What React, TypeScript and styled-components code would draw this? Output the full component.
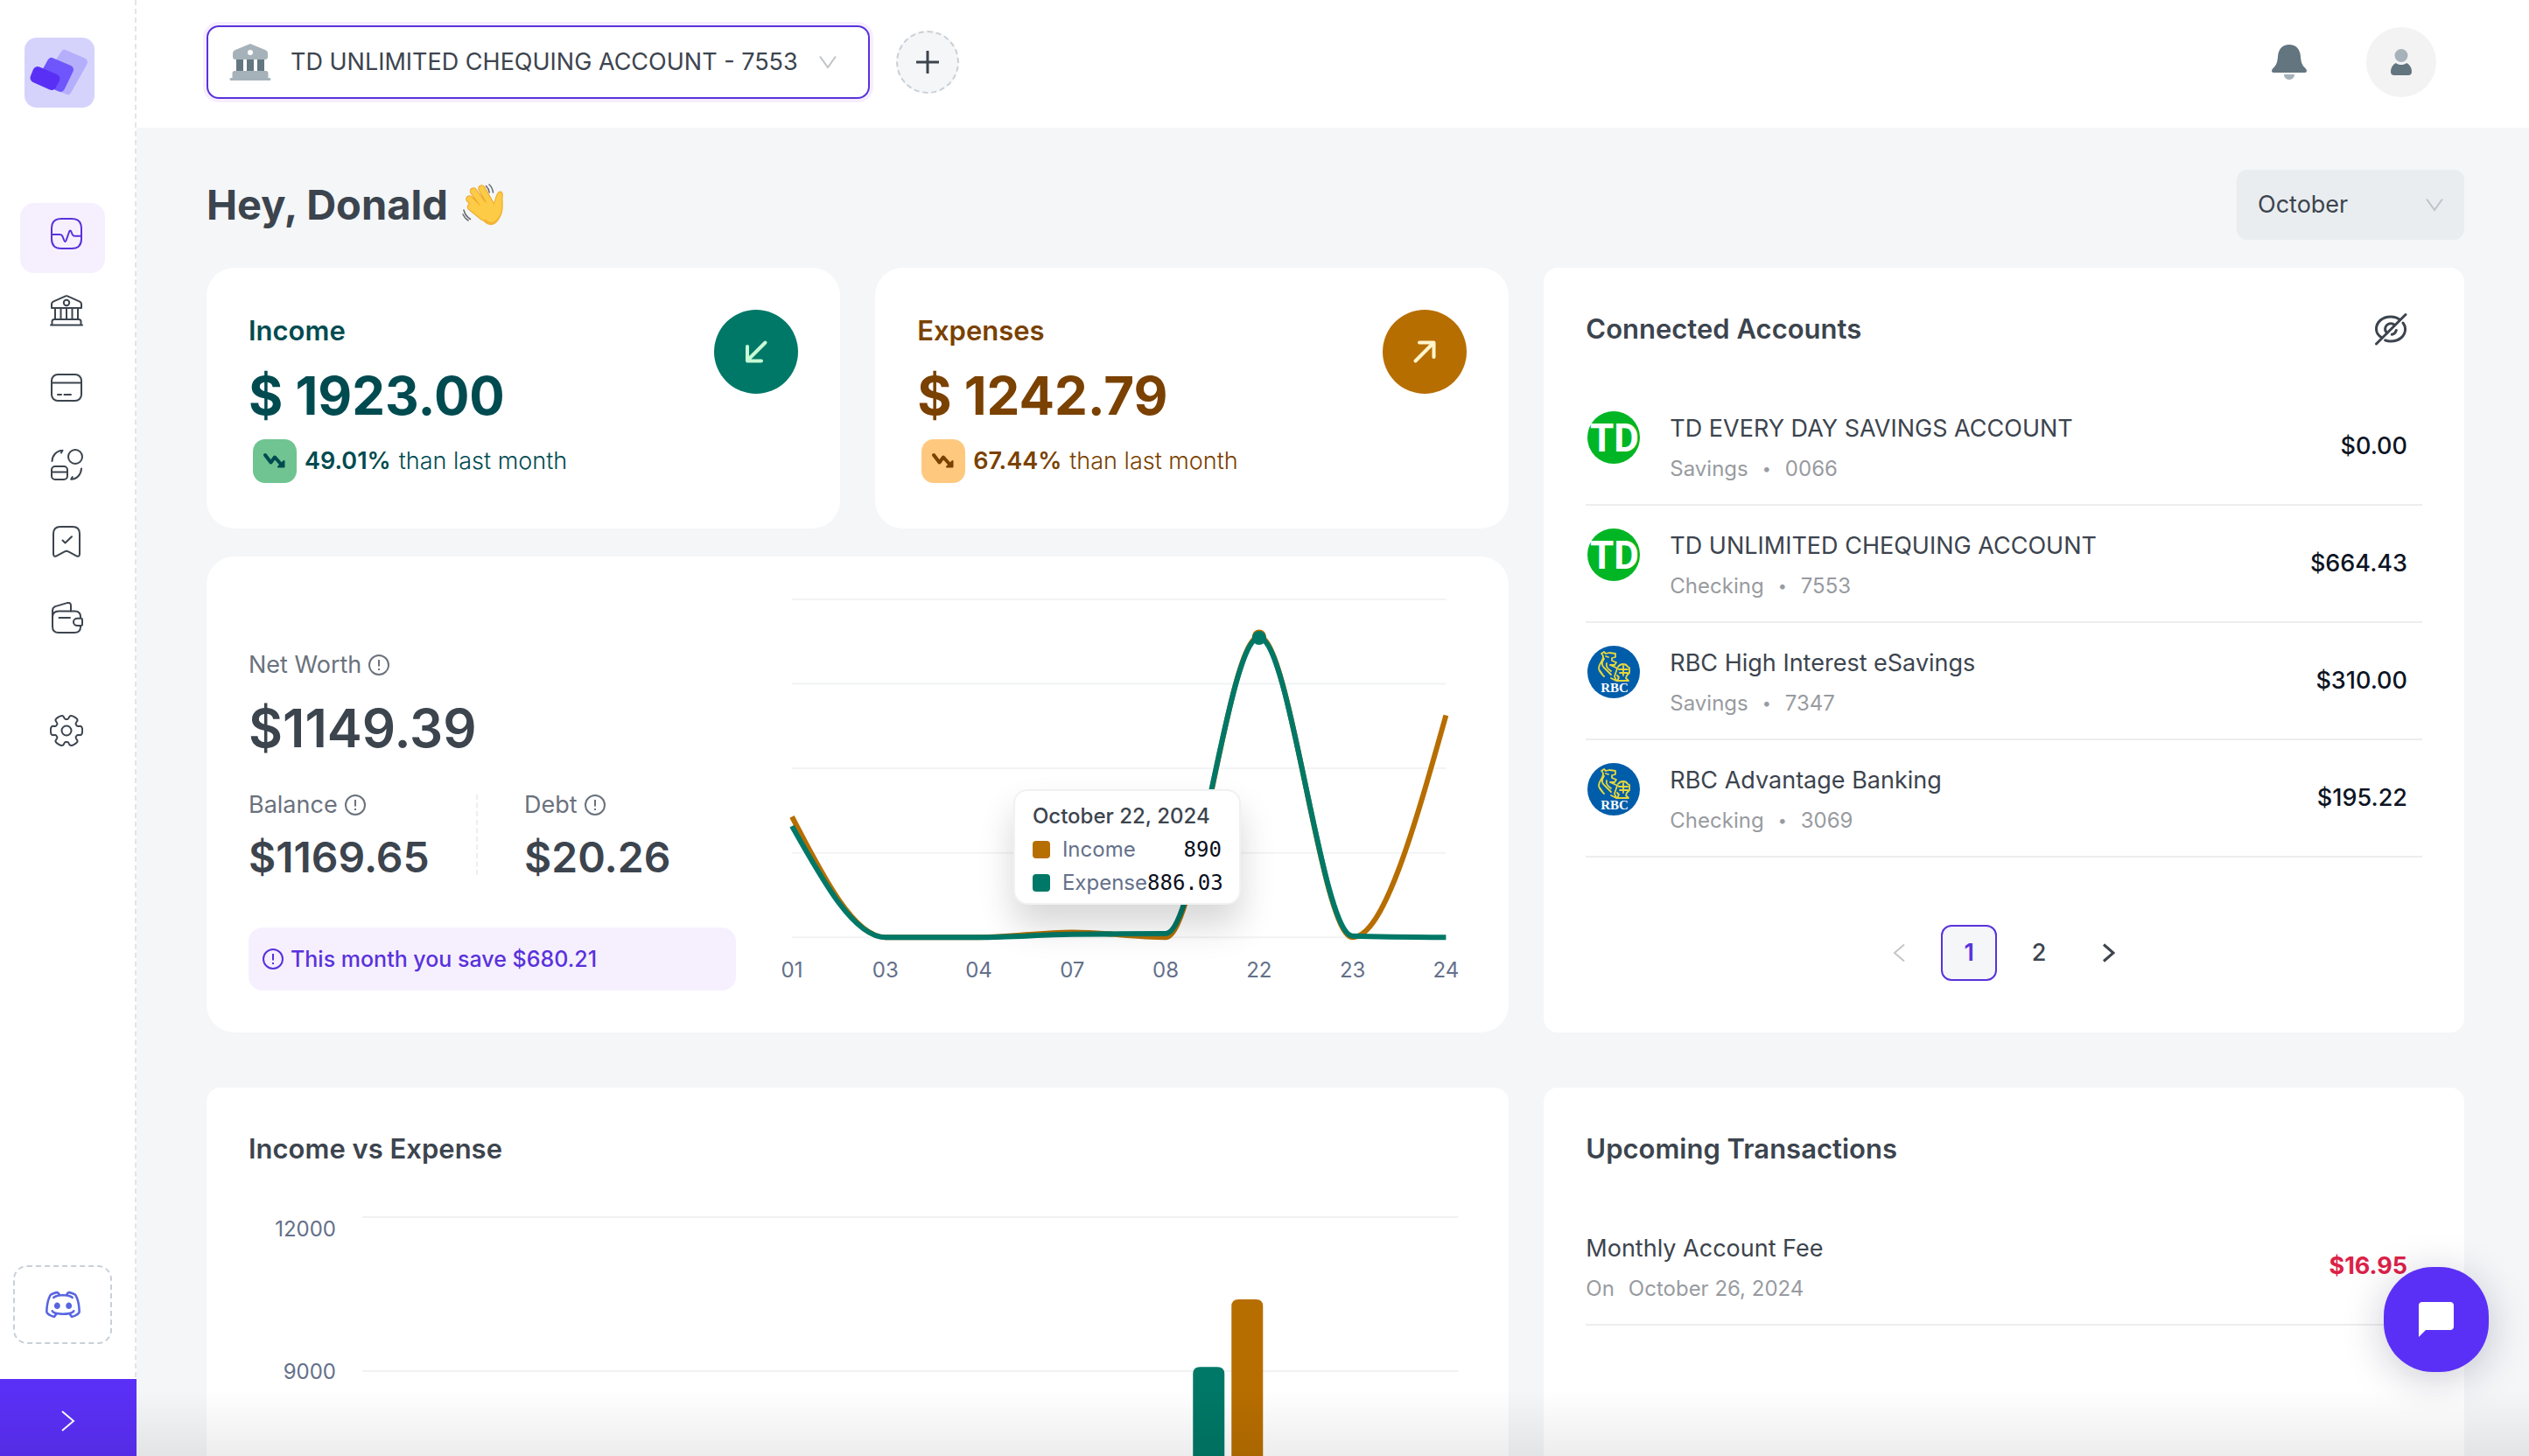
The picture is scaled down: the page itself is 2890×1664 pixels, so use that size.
import React from "react";
import styled, { createGlobalStyle, css } from "styled-components";
import { RxDiscordLogo } from "react-icons/rx";

const font = `Inter, "Liberation Sans", sans-serif`;
const mono = `"DejaVu Sans Mono", "Liberation Mono", monospace`;

const c = {
  purple: "#5b30f6",
  purpleText: "#5932dc",
  lilac: "#f6f0fe",
  page: "#f4f6f8",
  ink: "#3c444e",
  label: "#6a727d",
  muted: "#989ba0",
  axis: "#64708a",
  line: "#eceded",
  green: "#007867",
  amber: "#b76e00",
};

const GlobalStyle = createGlobalStyle`
  *, *::before, *::after { box-sizing: border-box; }
  body { margin: 0; background: ${c.page}; color: ${c.ink}; font-family: ${font}; font-size: 27px; line-height: 40px; }
  h1, h2, p, ul, dl, dd { margin: 0; padding: 0; }
  ul { list-style: none; }
  button, select { font: inherit; color: inherit; cursor: pointer; }
  svg { display: block; flex: none; }
`;

/* ---------- shell ---------- */

const Shell = styled.div`
  display: flex;
  height: 100vh;
  overflow: hidden;
`;

const Sidebar = styled.aside`
  flex: none;
  display: flex;
  flex-direction: column;
  width: 156px;
  background: #fff;
  border-right: 2px dashed #e2e5e8;
`;

const LogoLink = styled.a`
  margin: 43px 0 0 28px;
  width: 80px;
  height: 80px;
`;

const Nav = styled.nav`
  display: flex;
  flex-direction: column;
  gap: 8px;
  margin: 109px 0 0 23px;
`;

const NavItem = styled.a<{ $active?: boolean; $apart?: boolean }>`
  display: flex;
  align-items: flex-start;
  width: 97px;
  height: 80px;
  padding: 16px 0 0 34px;
  border-radius: 16px;
  color: ${(p) => (p.$active ? c.purpleText : c.ink)};
  background: ${(p) => (p.$active ? c.lilac : "transparent")};
  margin-top: ${(p) => (p.$apart ? "40px" : "0")};
`;

const CommunityLink = styled.a`
  display: flex;
  align-items: center;
  justify-content: center;
  width: 113px;
  height: 90px;
  margin: auto 0 40px 15px;
  border: 2px dashed #c8d0d7;
  border-radius: 16px;
  color: #5865e0;
`;

const ExpandButton = styled.button`
  display: flex;
  align-items: center;
  justify-content: center;
  width: 156px;
  height: 88px;
  flex: none;
  padding: 8px 0 0;
  border: 0;
  color: #fff;
  background: ${c.purple};
`;

const Page = styled.div`
  flex: 1;
  min-width: 0;
  display: flex;
  flex-direction: column;
`;

const Header = styled.header`
  flex: none;
  display: flex;
  align-items: center;
  height: 146px;
  padding: 0 106px 4px 80px;
  background: #fff;
`;

const AccountPicker = styled.label`
  position: relative;
  display: flex;
  align-items: center;
  gap: 22px;
  width: 758px;
  height: 84px;
  padding-left: 24px;
  border: 2px solid ${c.purpleText};
  border-radius: 14px;
  box-shadow: 0 0 0 4px #f6eefe;
`;

const BareSelect = styled.select`
  flex: 1;
  min-width: 0;
  height: 100%;
  padding: 0;
  border: 0;
  outline: 0;
  appearance: none;
  background: transparent;
`;

const Caret = styled.span<{ $right: number }>`
  position: absolute;
  right: ${(p) => p.$right}px;
  top: 50%;
  transform: translateY(-50%);
  pointer-events: none;
  color: #bfc3c7;
`;

const AddButton = styled.button`
  display: grid;
  place-items: center;
  width: 72px;
  height: 72px;
  margin-left: 30px;
  padding: 0;
  border: 2px dashed #c8d0d7;
  border-radius: 50%;
  background: ${c.page};
`;

const HeaderActions = styled.div`
  display: flex;
  align-items: center;
  gap: 68px;
  margin-left: auto;
`;

const PlainButton = styled.button`
  padding: 0;
  border: 0;
  background: none;
`;

const Avatar = styled.button`
  display: grid;
  place-items: center;
  width: 80px;
  height: 80px;
  padding: 0;
  border: 0;
  border-radius: 50%;
  background: #f3f3f3;
`;

const Main = styled.main`
  flex: 1;
  min-height: 0;
  overflow: hidden;
  padding: 48px 74px 0 80px;
`;

const Greeting = styled.div`
  display: flex;
  align-items: center;
  justify-content: space-between;
  height: 80px;
  margin-bottom: 32px;
`;

const Hello = styled.h1`
  display: flex;
  align-items: center;
  gap: 16px;
  font-size: 47px;
  line-height: 64px;
  font-weight: 700;
`;

const MonthPicker = styled.label`
  position: relative;
  display: flex;
  width: 260px;
  height: 80px;
  padding-left: 24px;
  border-radius: 12px;
  background: #e9edf0;
`;

const Grid = styled.div`
  display: grid;
  grid-template-columns: repeat(12, minmax(0, 1fr));
  column-gap: 40px;
  row-gap: 63px;
`;

const Column = styled.div<{ $span: number }>`
  grid-column: span ${(p) => p.$span};
  display: flex;
  flex-direction: column;
  gap: 32px;
`;

const Card = styled.section<{ $round?: boolean }>`
  padding: 48px;
  border-radius: ${(p) => (p.$round ? 32 : 16)}px;
  background: #fff;
`;

const Pair = styled.div`
  display: grid;
  grid-template-columns: 1fr 1fr;
  gap: 40px;
`;

/* ---------- income / expense tiles ---------- */

const StatCard = styled(Card)<{ $ink: string }>`
  display: flex;
  justify-content: space-between;
  padding-bottom: 52px;
  color: ${(p) => p.$ink};
`;

const StatBody = styled.div`
  display: flex;
  flex-direction: column;
  gap: 8px;
`;

const title = css`
  font-size: 31px;
  line-height: 48px;
  font-weight: 600;
`;

const StatTitle = styled.h2`
  ${title}
`;

const StatValue = styled.p`
  font-size: 60px;
  line-height: 84px;
  font-weight: 700;
`;

const Trend = styled.p`
  display: flex;
  align-items: center;
  gap: 9px;
  padding-left: 5px;
  font-weight: 300;
`;

const TrendBadge = styled.span<{ $bg: string }>`
  display: grid;
  place-items: center;
  width: 50px;
  height: 50px;
  border-radius: 14px;
  background: ${(p) => p.$bg};
`;

const Strong = styled.strong`
  font-weight: 600;
`;

const Disc = styled.span<{ $bg: string; $fg: string }>`
  display: grid;
  place-items: center;
  width: 96px;
  height: 96px;
  border-radius: 50%;
  color: ${(p) => p.$fg};
  background: ${(p) => p.$bg};
`;

/* ---------- net worth ---------- */

const WorthCard = styled(Card)`
  flex: 1;
  display: grid;
  grid-template-columns: 2fr 3fr;
  min-height: 544px;
`;

const WorthInfo = styled.div`
  display: flex;
  flex-direction: column;
  justify-content: flex-end;
`;

const Figure = styled.div`
  display: flex;
  flex-direction: column;
  gap: 12px;
`;

const FigureLabel = styled.p`
  display: flex;
  align-items: center;
  gap: 8px;
  color: ${c.label};
`;

const FigureValue = styled.p<{ $big?: boolean }>`
  font-size: ${(p) => (p.$big ? 60 : 48)}px;
  line-height: ${(p) => (p.$big ? 80 : 56)}px;
  font-weight: 600;
`;

const Split = styled.div`
  display: flex;
  margin: 28px 0 52px;
`;

const BalanceFigure = styled(Figure)`
  width: 260px;
`;

const DashedRule = styled.span`
  width: 2px;
  margin: 8px 53px 8px 0;
  border-left: 2px dashed #eceeef;
`;

const SaveNote = styled.p`
  display: flex;
  align-items: center;
  gap: 8px;
  height: 72px;
  padding: 0 16px;
  border-radius: 16px;
  font-size: 25px;
  font-weight: 500;
  color: ${c.purpleText};
  background: ${c.lilac};
`;

const ChartBox = styled.div`
  position: relative;
  margin-left: 40px;
`;

const Drawing = styled.svg`
  width: 100%;
  height: auto;
  overflow: visible;
`;

const AxisText = styled.text`
  font-family: ${font};
  font-size: 24px;
  fill: ${c.axis};
`;

const Tooltip = styled.div`
  position: absolute;
  left: 277px;
  top: 218px;
  width: 260px;
  padding: 10px 20px 4px;
  border: 2px solid #eff1f3;
  border-radius: 16px;
  background: #fff;
  font-size: 24px;
  line-height: 38px;
  box-shadow: 0 24px 40px rgba(0, 0, 0, 0.16);
`;

const TooltipTitle = styled.p`
  font-weight: 500;
`;

const TooltipRow = styled.p`
  display: flex;
  align-items: center;
  color: ${c.axis};
`;

const Swatch = styled.span<{ $bg: string }>`
  flex: none;
  width: 20px;
  height: 20px;
  margin-right: 14px;
  border-radius: 4px;
  background: ${(p) => p.$bg};
`;

const TooltipValue = styled.span`
  margin-left: auto;
  font-family: ${mono};
  color: #0c1020;
`;

/* ---------- lists ---------- */

const CardHead = styled.div`
  display: flex;
  align-items: center;
  justify-content: space-between;
  padding: 0 17px 0 0;
`;

const CardTitle = styled.h2`
  ${title}
  line-height: 44px;
`;

const AccountsCard = styled(Card)`
  flex: 1;
`;

const List = styled.ul<{ $gap: number }>`
  margin-top: ${(p) => p.$gap}px;
`;

const ListRow = styled.li`
  display: flex;
  align-items: center;
  height: 134px;
  padding-right: 17px;
  border-bottom: 2px solid ${c.line};
`;

const BankMark = styled.span`
  width: 60px;
  margin: 0 34px 20px 2px;
`;

const RowText = styled.div`
  display: flex;
  flex-direction: column;
  gap: 8px;
  padding-top: 4px;
`;

const RowTitle = styled.p`
  line-height: 40px;
`;

const RowMeta = styled.p`
  display: flex;
  gap: 16px;
  font-size: 24px;
  line-height: 36px;
  color: ${c.muted};
`;

const Bullet = styled.span`
  font-size: 18px;
`;

const Amount = styled.span<{ $due?: boolean }>`
  margin-left: auto;
  font-weight: ${(p) => (p.$due ? 700 : 500)};
  color: ${(p) => (p.$due ? "#dc2148" : "#0d1424")};
`;

const Pager = styled.nav`
  display: flex;
  justify-content: center;
  gap: 16px;
  margin-top: 77px;
`;

const PagerButton = styled.button<{ $current?: boolean }>`
  display: grid;
  place-items: center;
  width: 64px;
  height: 64px;
  padding: 0;
  border: 2px solid ${(p) => (p.$current ? c.purpleText : "transparent")};
  border-radius: 12px;
  background: ${(p) => (p.$current ? c.page : "transparent")};
  color: ${(p) => (p.$current ? c.purpleText : c.ink)};
  font-weight: ${(p) => (p.$current ? 600 : 500)};

  &:disabled {
    color: #c3c5c7;
  }
`;

const BarArea = styled.div`
  margin-top: 41px;
`;

/* ---------- floating parts ---------- */

const ChatButton = styled.button`
  position: fixed;
  right: 46px;
  bottom: 96px;
  display: grid;
  place-items: center;
  width: 120px;
  height: 120px;
  padding: 0;
  border: 0;
  border-radius: 56px;
  background: ${c.purple};
  box-shadow: 0 8px 48px rgba(20, 20, 60, 0.22);
`;

const BottomFade = styled.div`
  position: fixed;
  left: 0;
  right: 0;
  bottom: 0;
  height: 76px;
  pointer-events: none;
  background: linear-gradient(to bottom, rgba(0, 0, 0, 0), rgba(0, 0, 0, 0.07));
`;

/* ---------- icons ---------- */

type IconProps = { children: React.ReactNode; size?: number; w?: number };

const Line = ({ children, size = 38, w = 2 }: IconProps) => (
  <svg
    width={size}
    height={size}
    viewBox="0 0 38 38"
    fill="none"
    stroke="currentColor"
    strokeWidth={w}
    strokeLinecap="round"
    strokeLinejoin="round"
    aria-hidden="true"
  >
    {children}
  </svg>
);

const PulseIcon = () => (
  <Line>
    <path d="M13 2h12c7.500 0 11 3.500 11 11v12c0 7.500-3.500 11-11 11H13C5.500 36 2 32.500 2 25V13C2 5.500 5.500 2 13 2z" />
    <path d="M2 20h9.500c1.600 0 2.300 .6 2.900 2l2 5c.6 1.500 1.500 1.500 2.100 0l3.700-10.500c.6-1.400 1.500-1.400 2.100 0l1.200 3c.6 1.600 1.500 2.300 3 2.300H36" />
  </Line>
);

const BankIcon = () => (
  <Line>
    <path d="M2 16v-4.500c0-1.400.6-2.300 1.900-2.800L18 2.400c.7-.3 1.300-.3 2 0l14.100 6.300c1.300.5 1.900 1.400 1.900 2.800V16z" />
    <circle cx="19" cy="10" r="3.200" />
    <path d="M6 16v13M12.500 16v13M19 16v13M25.500 16v13M32 16v13" />
    <path d="M2.500 35v-3.500c0-1.400.8-2.500 2.500-2.500h28c1.700 0 2.500 1.100 2.500 2.500V35M1 35.500h36" />
  </Line>
);

const CardIcon = () => (
  <Line>
    <rect x="2" y="4" width="34" height="30" rx="7" />
    <path d="M2 13.500h34M9 27h4M16.500 27h7.500" />
  </Line>
);

const ExchangeIcon = () => (
  <Line>
    <circle cx="29" cy="10" r="8" />
    <rect x="2" y="21" width="18" height="15" rx="4" />
    <path d="M2 27.500h18M2.500 15C2.800 8.500 7.500 3 14.500 2.700M14.500 2.700l-1.600 2.800" />
    <path d="M36 23.500c-.3 6.500-4.800 12-11.800 12.300M24.200 35.800l1.600-2.800" />
  </Line>
);

const BookmarkIcon = () => (
  <Line>
    <path d="M12 2h14c5.500 0 8 2.500 8 8v23c0 2.600-1.500 3.500-3.600 2.300l-9.300-5c-1.400-.8-2.800-.8-4.200 0l-9.300 5C5.500 36.500 4 35.600 4 33V10c0-5.500 2.500-8 8-8z" />
    <path d="M14.500 17.500l3 3 7.500-7.300" />
  </Line>
);

const WalletIcon = () => (
  <Line>
    <path d="M35 18v-1c0-4.500-2-6.500-6.500-6.500H10C5 10.500 3 13 3 17.500V28c0 4.500 2.500 7 7 7h18c4.500 0 7-2.500 7-6.500v-1.500" />
    <path d="M3 19V10c0-2.500.8-4 3-4.900l13.500-4C22.500.4 24 1.500 24 4v6.500M10.500 18H23" />
    <path d="M37 20v5.500c0 1-.6 1.500-1.500 1.500h-4C28.800 27 27 25 27 22.800s1.800-4 4.500-4h4c.9 0 1.500.3 1.500 1.200z" />
  </Line>
);

/** Six rounded teeth around a hub, smoothed through the midpoints of a control polygon. */
function gearPath(cx: number, cy: number): string {
  const pts: [number, number][] = [];
  for (let k = 0; k < 6; k++) {
    for (const [deg, r] of [[-21, 13], [-17, 19], [17, 19], [21, 13], [30, 13]]) {
      const a = ((k * 60 + deg) * Math.PI) / 180;
      pts.push([cx + r * Math.cos(a), cy + r * Math.sin(a)]);
    }
  }
  const mid = (a: [number, number], b: [number, number]) =>
    `${((a[0] + b[0]) / 2).toFixed(2)} ${((a[1] + b[1]) / 2).toFixed(2)}`;
  const n = pts.length;
  return pts.reduce(
    (d, p, i) => `${d}Q${p[0].toFixed(2)} ${p[1].toFixed(2)} ${mid(p, pts[(i + 1) % n])}`,
    `M${mid(pts[n - 1], pts[0])}`
  ) + "Z";
}

const GearIcon = () => (
  <Line>
    <path d={gearPath(19, 19)} />
    <circle cx="19" cy="19" r="5.500" />
  </Line>
);

const EyeOffIcon = () => (
  <Line w={3}>
    <path d="M9 29C4.500 26.500 2.500 23 2.500 19 2.500 11 9.500 5 19 5c4 0 7.500 1 10.500 3.500" />
    <path d="M33 12c1.800 2.200 2.600 4.500 2.600 7 0 8-7 14-16.600 14-2.300 0-4.500-.4-6.300-1.200" />
    <path d="M15 23.500c-1.700-1.200-2.400-2.800-2.400-4.500a6.500 6.500 0 0 1 6.500-6.300c1.700 0 3.200.6 4.400 1.700" />
    <path d="M25.300 20.500a6.500 6.500 0 0 1-5 4.800M2.500 36L36 2.500" />
  </Line>
);

const Chevron = ({ d, w, h, sw = 2 }: { d: string; w: number; h: number; sw?: number }) => (
  <svg width={w} height={h} viewBox={`0 0 ${w} ${h}`} fill="none" stroke="currentColor" strokeWidth={sw} aria-hidden="true">
    <path d={d} />
  </svg>
);
const ChevronDown = () => <Chevron w={20} h={16} d="M1 1.500L10 14L19 1.500" />;
const ChevronLeft = () => <Chevron w={14} h={22} d="M13 1.500L2 11L13 20.500" />;
const ChevronRight = () => <Chevron w={14} h={22} sw={3} d="M1 1.500L12 11L1 20.500" />;
const ExpandChevron = () => <Chevron w={16} h={24} sw={2} d="M1 1L14 12L1 23" />;

const InfoIcon = () => (
  <svg width="24" height="24" viewBox="0 0 24 24" fill="none" stroke="currentColor" strokeWidth="2" aria-hidden="true">
    <circle cx="12" cy="12" r="11" />
    <path d="M12 6v7.500M12 16v2" />
  </svg>
);

const TrendDown = () => (
  <svg width="28" height="20" viewBox="0 0 28 20" fill="none" stroke="currentColor" strokeWidth="4" strokeLinecap="round" strokeLinejoin="round" aria-hidden="true">
    <path d="M3 3l6.500 8.500L14 5.500l8 9" />
    <path d="M24.500 10v6.500H18z" fill="currentColor" strokeWidth="2" />
  </svg>
);

const ArrowIn = () => (
  <svg width="28" height="28" viewBox="0 0 28 28" fill="none" stroke="currentColor" strokeWidth="4" strokeLinecap="round" strokeLinejoin="round" aria-hidden="true">
    <path d="M24.500 3.500L4 24M4 8v16.500h16" />
  </svg>
);

const ArrowOut = () => (
  <svg width="28" height="28" viewBox="0 0 28 28" fill="none" stroke="currentColor" strokeWidth="4" strokeLinecap="round" strokeLinejoin="round" aria-hidden="true">
    <path d="M3.500 24.500L24 4M8 3.500h16.500V20" />
  </svg>
);

const BankSolid = () => (
  <svg width="48" height="44" viewBox="0 0 48 44" aria-hidden="true">
    <path d="M8 17h8v17H8zM20 17h8v17h-8zM32 17h8v17h-8z" fill="#637781" />
    <path fillRule="evenodd" fill="#a6b2ba" d="M24 1l17 7c2 1 3 2 3 4v4c0 2-1 3-3 3H7c-2 0-3-1-3-3v-4c0-2 1-3 3-4zM24 8a3 3 0 1 0 0 6 3 3 0 0 0 0-6z" />
    <path fill="#a6b2ba" d="M6 32h36c1.500 0 2.500 1 2.500 2.500V40H46a1.500 1.500 0 0 1 0 3H2a1.500 1.500 0 0 1 0-3h1.500v-5.500C3.500 33 4.500 32 6 32z" />
  </svg>
);

const BellIcon = () => (
  <svg width="40" height="40" viewBox="0 0 40 40" aria-hidden="true">
    <path fill="#63757f" d="M20 0c8 0 12 5.500 12.800 12 .6 6 1 10 4.200 13.500 2 2 3 3 3 4.500 0 1.300-.9 2-2 2H2c-1.100 0-2-.7-2-2 0-1.500 1-2.500 3-4.500C6.200 22 6.600 18 7.200 12 8 5.500 12 0 20 0z" />
    <path fill="#a6b2ba" d="M14 34h12c0 3.500-2.500 6-6 6s-6-2.500-6-6z" />
  </svg>
);

const UserIcon = () => (
  <svg width="24" height="30" viewBox="0 0 24 30" aria-hidden="true">
    <circle cx="12" cy="7.500" r="7.500" fill="#a6b2ba" />
    <path fill="#63757f" d="M6 16c1.600 1.400 3.600 2 6 2s4.400-.6 6-2c4 2 6 6 6 10 0 2.600-1.400 4-4 4H4c-2.600 0-4-1.400-4-4 0-4 2-8 6-10z" />
  </svg>
);

const PlusIcon = () => (
  <svg width="26" height="26" viewBox="0 0 26 26" stroke="currentColor" strokeWidth="3" aria-hidden="true">
    <path d="M13 0v26M0 13h26" />
  </svg>
);

const BrandLogo = () => (
  <svg width="80" height="80" viewBox="0 0 80 80" strokeLinejoin="round" aria-hidden="true">
    <rect width="80" height="80" rx="14" fill="#d5d3fc" />
    <path d="M46 19L67 28L49 60L26 50z" fill="#b5aefb" stroke="#b5aefb" strokeWidth="10" />
    <path d="M31 28L51 36.500L41 57L20 48z" fill="#6f55fc" stroke="#6f55fc" strokeWidth="10" />
    <path d="M15 38.500L35 47L31 54.500L12 46z" fill="#5a2ff5" stroke="#5a2ff5" strokeWidth="11" />
  </svg>
);

const WavingHand = () => (
  <svg width="50" height="50" viewBox="0 0 50 50" fill="none" strokeLinecap="round" role="img" aria-label="Waving hand">
    <g stroke="#e9a52c" strokeWidth="8.500">
      <path d="M22.500 6.500L33 25M13 9.500L28 30M8.500 18.500L24 34M10 27.500L24 39" />
    </g>
    <path fill="#f2b233" d="M24 21l12 2c2-4 2.500-12 7-13.500 3.500-.6 4.500 3 3.500 8 .5 9 1 17-4.500 24.500C37.500 49 32 49.500 27 46L13 34z" />
    <g stroke="#fdcb45" strokeWidth="6.500">
      <path d="M22.500 6.500L33 25M13 9.500L28 30M8.500 18.500L24 34M10 27.500L24 39" />
    </g>
    <path fill="#fdcb45" d="M25 22l11.500 3c2.500-5 3-12 6.500-14 2.500 0 3 3 2.200 7 .3 9 .8 15-4.200 22-4 6-8.500 6-13 3L16 33z" />
    <path stroke="#66666c" strokeWidth="1.500" d="M31 2c2.500 2 4 5 4.500 9M27.500 3.500c2 2 3.300 4.500 3.700 7.500M2 31c1 4.500 3.500 8 7.500 10.500M1 36c1.500 3 3.500 5.500 6 7" />
  </svg>
);

const TdLogo = () => (
  <svg width="60" height="60" viewBox="0 0 60 60" role="img" aria-label="TD">
    <circle cx="30" cy="30" r="30" fill="#00b624" />
    <text x="31" y="46" textAnchor="middle" fontFamily="Roboto, Liberation Sans, sans-serif" fontWeight="700" fontSize="44" fill="#fff">
      TD
    </text>
  </svg>
);

const RbcLogo = () => (
  <svg width="60" height="60" viewBox="0 0 60 60" role="img" aria-label="RBC">
    <circle cx="30" cy="30" r="30" fill="#005daa" />
    <g fill="none" stroke="#e8d83a" strokeWidth="1.800" strokeLinecap="round" strokeLinejoin="round">
      <path d="M16 9l3-2 2 2 4-1 7 1v4l-4 1v3l5 2-2 3h-5M21 12l3 1M17 10c4 5-4 9-4 16 0 3 3 6 6 9M19 15c-3 4-3 8 1 11l7 7M22 20c-1 4 1 6 5 9M26 22l9 4M14 28l4 6" />
      <path d="M35 24c3-4 9-4 11 0l2 1v6l-3 3-1 3 3 3H34l2-4-2-2M36 27h10M37 31h9M41 23v11M34 26l-3 9 2 5-6-3" />
    </g>
    <text x="31" y="53" textAnchor="middle" fontFamily="Liberation Serif, serif" fontWeight="700" fontSize="15" fill="#fff">RBC</text>
  </svg>
);

/* ---------- charts ---------- */

const days = ["01", "03", "04", "07", "08", "22", "23", "24"];
const incomeSeries = [357, 0, 0, 15, 0, 890, 0, 657];
const expenseSeries = [329, 0, 0, 9, 11, 886, 4, 0];

/** Monotone cubic through evenly spaced points. */
function monotone(xs: number[], ys: number[]): string {
  const n = xs.length;
  const s = ys.slice(1).map((y, i) => (y - ys[i]) / (xs[i + 1] - xs[i]));
  const m = xs.map((_, i) => {
    if (i === 0 || i === n - 1) return 0;
    if (s[i - 1] * s[i] <= 0) return 0;
    return Math.sign(s[i]) * Math.min(Math.abs(s[i - 1]), Math.abs(s[i]), Math.abs(s[i - 1] + s[i]) / 4) * 2;
  });
  m[0] = (3 * s[0] - m[1]) / 2;
  m[n - 1] = (3 * s[n - 2] - m[n - 2]) / 2;
  let d = `M${xs[0]} ${ys[0]}`;
  for (let i = 0; i < n - 1; i++) {
    const h = (xs[i + 1] - xs[i]) / 3;
    d += `C${xs[i] + h} ${ys[i] + h * m[i]} ${xs[i + 1] - h} ${ys[i + 1] - h * m[i + 1]} ${xs[i + 1]} ${ys[i + 1]}`;
  }
  return d;
}

function TrendChart() {
  const x0 = 24;
  const x1 = 771;
  const top = 1;
  const base = 387;
  const xs = days.map((_, i) => x0 + ((x1 - x0) * i) / (days.length - 1));
  const y = (v: number) => base - ((base - top) * v) / 1000;
  return (
    <Drawing viewBox="0 0 795 448" role="img" aria-label="Income and expenses by day">
      {[0, 250, 500, 750, 1000].map((v) => (
        <path key={v} d={`M${x0} ${y(v)}H${x1}`} stroke="#f2f3f5" strokeWidth="2" />
      ))}
      <path d={monotone(xs, incomeSeries.map(y))} fill="none" stroke={c.amber} strokeWidth="6" />
      <circle cx={xs[5]} cy={y(incomeSeries[5])} r="8" fill={c.amber} />
      <path d={monotone(xs, expenseSeries.map(y))} fill="none" stroke={c.green} strokeWidth="6" />
      <circle cx={xs[5]} cy={y(expenseSeries[5])} r="8" fill={c.green} />
      {days.map((d, i) => (
        <AxisText key={d} x={xs[i]} y={433} textAnchor="middle">
          {d}
        </AxisText>
      ))}
    </Drawing>
  );
}

const bars = [
  { x: 1079, value: 9080, fill: c.green },
  { x: 1123, value: 10400, fill: c.amber },
];

function CompareChart() {
  const y = (v: number) => 15 + ((12000 - v) / 3000) * 176;
  return (
    <Drawing viewBox="0 0 1392 340" role="img" aria-label="Income vs expense by month">
      {[12000, 9000].map((v) => (
        <g key={v}>
          <path d={`M130 ${y(v)}H1382`} stroke="#f0f1f3" strokeWidth="2" />
          <AxisText x="100" y={Math.max(y(v), 28) + 9} textAnchor="end">
            {v}
          </AxisText>
        </g>
      ))}
      {bars.map((b) => (
        <path key={b.x} fill={b.fill} d={`M${b.x} 340V${y(b.value) + 8}q0-8 8-8h20q8 0 8 8V340z`} />
      ))}
    </Drawing>
  );
}

/* ---------- data ---------- */

const navItems = [
  { label: "Dashboard", icon: <PulseIcon />, active: true },
  { label: "Banks", icon: <BankIcon /> },
  { label: "Cards", icon: <CardIcon /> },
  { label: "Transactions", icon: <ExchangeIcon /> },
  { label: "Bills", icon: <BookmarkIcon /> },
  { label: "Wallet", icon: <WalletIcon /> },
  { label: "Settings", icon: <GearIcon />, apart: true },
];

const accounts = [
  { bank: "TD", name: "TD EVERY DAY SAVINGS ACCOUNT", kind: "Savings", mask: "0066", amount: "$0.00" },
  { bank: "TD", name: "TD UNLIMITED CHEQUING ACCOUNT", kind: "Checking", mask: "7553", amount: "$664.43" },
  { bank: "RBC", name: "RBC High Interest eSavings", kind: "Savings", mask: "7347", amount: "$310.00" },
  { bank: "RBC", name: "RBC Advantage Banking", kind: "Checking", mask: "3069", amount: "$195.22" },
];

type StatProps = {
  name: string;
  value: string;
  pct: string;
  ink: string;
  badge: string;
  disc: string;
  arrow: string;
  icon: React.ReactNode;
};

const Stat = ({ name, value, pct, ink, badge, disc, arrow, icon }: StatProps) => (
  <StatCard $round $ink={ink}>
    <StatBody>
      <StatTitle>{name}</StatTitle>
      <StatValue>{value}</StatValue>
      <Trend>
        <TrendBadge $bg={badge}>
          <TrendDown />
        </TrendBadge>
        <Strong>{pct}</Strong>
        <span>than last month</span>
      </Trend>
    </StatBody>
    <Disc $bg={disc} $fg={arrow}>
      {icon}
    </Disc>
  </StatCard>
);

export default function App() {
  return (
    <Shell>
      <GlobalStyle />
      <Sidebar>
        <LogoLink href="#" aria-label="Home">
          <BrandLogo />
        </LogoLink>
        <Nav aria-label="Main">
          {navItems.map((n) => (
            <NavItem key={n.label} href="#" aria-label={n.label} $active={n.active} $apart={n.apart}>
              {n.icon}
            </NavItem>
          ))}
        </Nav>
        <CommunityLink href="#" aria-label="Discord">
          <RxDiscordLogo size={40} />
        </CommunityLink>
        <ExpandButton aria-label="Expand menu">
          <ExpandChevron />
        </ExpandButton>
      </Sidebar>

      <Page>
        <Header>
          <AccountPicker>
            <BankSolid />
            <BareSelect aria-label="Account">
              <option>TD UNLIMITED CHEQUING ACCOUNT - 7553</option>
            </BareSelect>
            <Caret $right={36}>
              <ChevronDown />
            </Caret>
          </AccountPicker>
          <AddButton aria-label="Add account">
            <PlusIcon />
          </AddButton>
          <HeaderActions>
            <PlainButton aria-label="Notifications">
              <BellIcon />
            </PlainButton>
            <Avatar aria-label="Profile">
              <UserIcon />
            </Avatar>
          </HeaderActions>
        </Header>

        <Main>
          <Greeting>
            <Hello>
              Hey, Donald <WavingHand />
            </Hello>
            <MonthPicker>
              <BareSelect aria-label="Month">
                <option>October</option>
              </BareSelect>
              <Caret $right={24}>
                <ChevronDown />
              </Caret>
            </MonthPicker>
          </Greeting>

          <Grid>
            <Column $span={7}>
              <Pair>
                <Stat name="Income" value="$ 1923.00" pct="49.01%" ink="#004b50" badge="#70c491" disc={c.green} arrow="#c8fad6" icon={<ArrowIn />} />
                <Stat name="Expenses" value="$ 1242.79" pct="67.44%" ink="#7a4100" badge="#fec97f" disc={c.amber} arrow="#fff5cc" icon={<ArrowOut />} />
              </Pair>

              <WorthCard $round>
                <WorthInfo>
                  <Figure>
                    <FigureLabel>
                      Net Worth <InfoIcon />
                    </FigureLabel>
                    <FigureValue $big>$1149.39</FigureValue>
                  </Figure>
                  <Split>
                    <BalanceFigure>
                      <FigureLabel>
                        Balance <InfoIcon />
                      </FigureLabel>
                      <FigureValue>$1169.65</FigureValue>
                    </BalanceFigure>
                    <DashedRule />
                    <Figure>
                      <FigureLabel>
                        Debt <InfoIcon />
                      </FigureLabel>
                      <FigureValue>$20.26</FigureValue>
                    </Figure>
                  </Split>
                  <SaveNote>
                    <InfoIcon /> This month you save $680.21
                  </SaveNote>
                </WorthInfo>
                <ChartBox>
                  <TrendChart />
                  <Tooltip role="tooltip">
                    <TooltipTitle>October 22, 2024</TooltipTitle>
                    <TooltipRow>
                      <Swatch $bg={c.amber} />
                      Income <TooltipValue>890</TooltipValue>
                    </TooltipRow>
                    <TooltipRow>
                      <Swatch $bg={c.green} />
                      Expense<TooltipValue>886.03</TooltipValue>
                    </TooltipRow>
                  </Tooltip>
                </ChartBox>
              </WorthCard>
            </Column>

            <Column $span={5}>
              <AccountsCard>
                <CardHead>
                  <CardTitle>Connected Accounts</CardTitle>
                  <PlainButton aria-label="Hide balances">
                    <EyeOffIcon />
                  </PlainButton>
                </CardHead>
                <List $gap={46}>
                  {accounts.map((a) => (
                    <ListRow key={a.mask}>
                      <BankMark>{a.bank === "TD" ? <TdLogo /> : <RbcLogo />}</BankMark>
                      <RowText>
                        <RowTitle>{a.name}</RowTitle>
                        <RowMeta>
                          <span>{a.kind}</span>
                          <Bullet>•</Bullet>
                          <span>{a.mask}</span>
                        </RowMeta>
                      </RowText>
                      <Amount>{a.amount}</Amount>
                    </ListRow>
                  ))}
                </List>
                <Pager aria-label="Pages">
                  <PagerButton disabled aria-label="Previous page">
                    <ChevronLeft />
                  </PagerButton>
                  <PagerButton $current aria-current="page">
                    1
                  </PagerButton>
                  <PagerButton>2</PagerButton>
                  <PagerButton aria-label="Next page">
                    <ChevronRight />
                  </PagerButton>
                </Pager>
              </AccountsCard>
            </Column>

            <Column $span={7}>
              <Card>
                <CardTitle>Income vs Expense</CardTitle>
                <BarArea>
                  <CompareChart />
                </BarArea>
              </Card>
            </Column>

            <Column $span={5}>
              <AccountsCard>
                <CardTitle>Upcoming Transactions</CardTitle>
                <List $gap={46}>
                  <ListRow>
                    <RowText>
                      <RowTitle>Monthly Account Fee</RowTitle>
                      <RowMeta>
                        <span>On</span>
                        <span>October 26, 2024</span>
                      </RowMeta>
                    </RowText>
                    <Amount $due>$16.95</Amount>
                  </ListRow>
                </List>
              </AccountsCard>
            </Column>
          </Grid>
        </Main>
      </Page>

      <ChatButton aria-label="Open chat">
        <svg width="40" height="40" viewBox="0 0 40 40" fill="#fff" aria-hidden="true">
          <path d="M4 0h32c2.500 0 4 1.500 4 4v24c0 2.500-1.500 4-4 4H8l-8 8V4c0-2.500 1.500-4 4-4z" />
        </svg>
      </ChatButton>
      <BottomFade />
    </Shell>
  );
}
